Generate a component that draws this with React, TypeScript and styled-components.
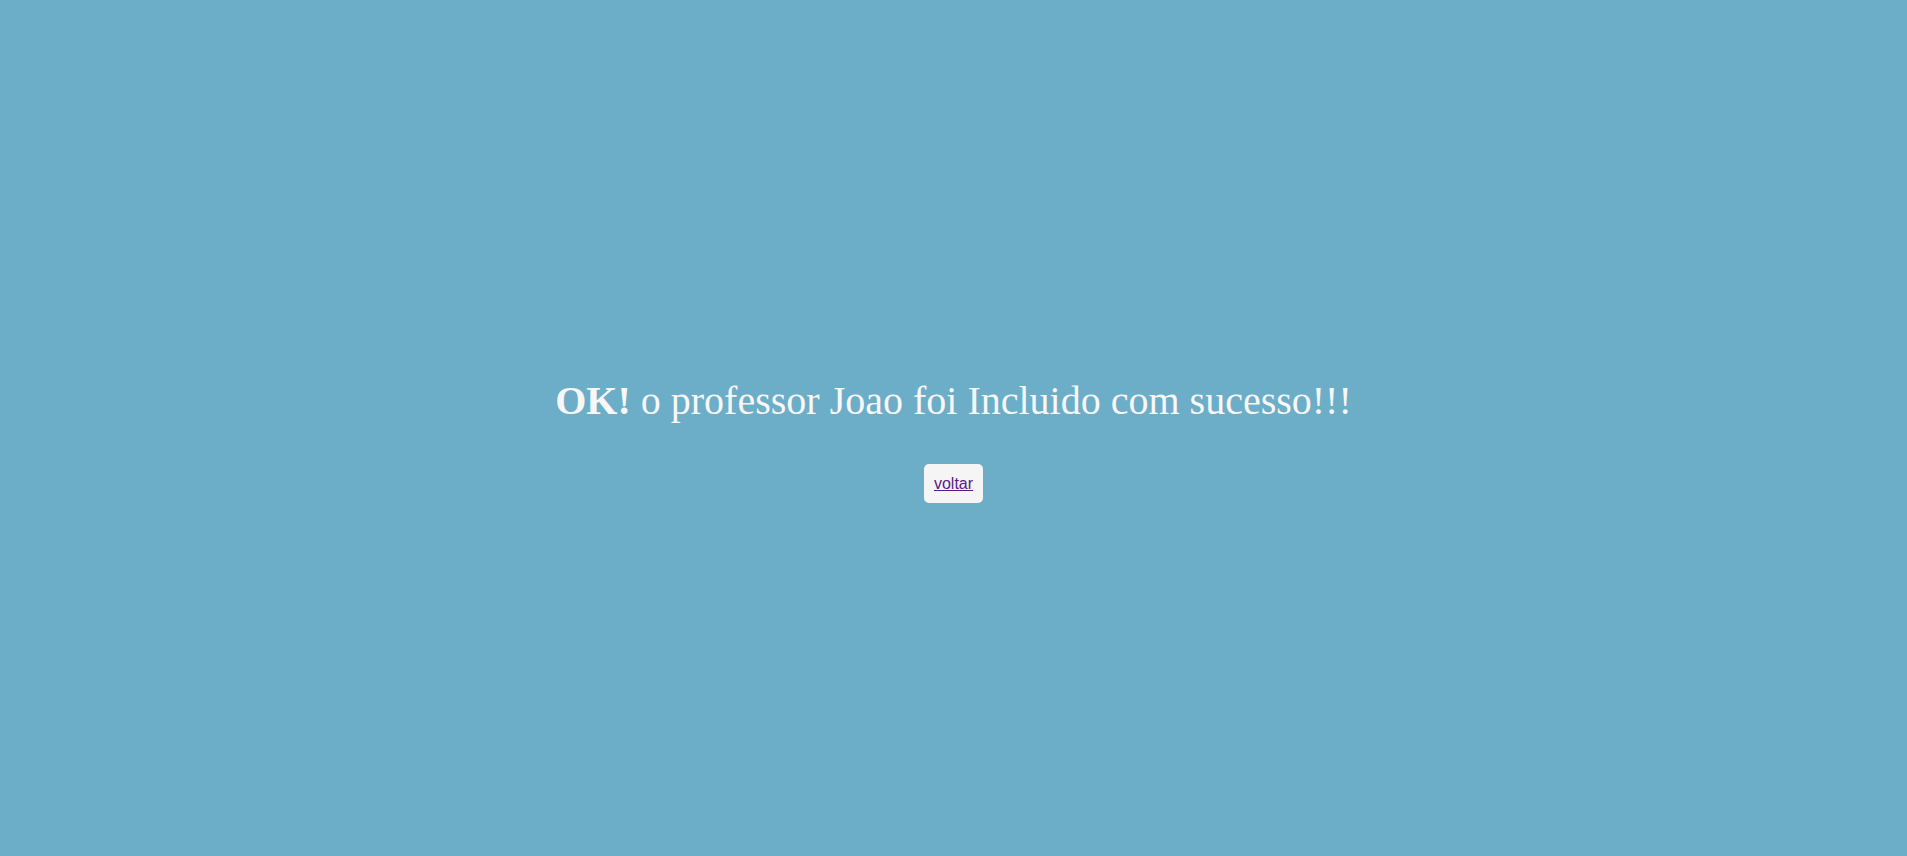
import React from "react";
import styled, { createGlobalStyle } from "styled-components";

const Global = createGlobalStyle`
  html, body { margin: 0; padding: 0; }
  body { background: #6cadc8; font-family: "Liberation Serif", "Times New Roman", serif; }
`;

const Page = styled.main`
  box-sizing: border-box;
  min-height: 100vh;
  padding-top: 24px;
  display: flex;
  flex-direction: column;
  align-items: center;
  justify-content: center;
  gap: 40px;
`;

const Message = styled.h1`
  margin: 0;
  font-family: "Liberation Serif", "Times New Roman", serif;
  font-size: 40px;
  font-weight: normal;
  color: #f7f7f7;
  line-height: 1.15;
`;

const Strong = styled.b`
  font-weight: bold;
`;

const Button = styled.div`
  background: #f5f5f5;
  border-radius: 5px;
  padding: 10px 10px;
  font-family: "Liberation Sans", Arial, sans-serif;
  font-size: 16px;
  line-height: 19px;
`;

const Link = styled.a`
  color: #551a8b;
  text-decoration: underline;
`;

export default function App() {
  return (
    <>
      <Global />
      <Page>
        <Message>
          <Strong>OK!</Strong> o professor Joao foi Incluido com sucesso!!!
        </Message>
        <Button>
          <Link href="#">voltar</Link>
        </Button>
      </Page>
    </>
  );
}
